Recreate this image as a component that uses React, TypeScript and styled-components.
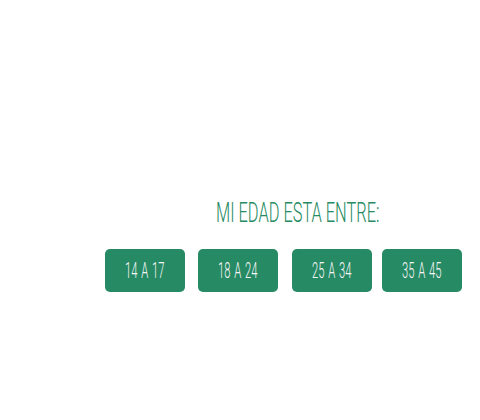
import React from "react";
import styled, { createGlobalStyle } from "styled-components";

const Global = createGlobalStyle`
  html, body { margin: 0; padding: 0; background: #ffffff; }
  body { font-family: Roboto, "Liberation Sans", sans-serif; }
`;

const Page = styled.div`
  width: 480px;
  height: 420px;
  display: flex;
  flex-direction: column;
  align-items: flex-start;
  padding-top: 197px;
  box-sizing: border-box;
`;

const Title = styled.h2`
  margin: 0 0 0 216px;
  font-weight: 300;
  font-size: 28px;
  line-height: 32px;
  color: #268a63;
  white-space: nowrap;
  transform: scaleX(0.585);
  transform-origin: left center;
`;

const Row = styled.div`
  display: flex;
  margin: 20px 0 0 105px;
`;

const AgeButton = styled.button<{ $gap: number }>`
  width: 80px;
  height: 43px;
  margin-right: ${(p) => p.$gap}px;
  border: none;
  border-radius: 5px;
  background: #268a64;
  color: #f6f6f6;
  font-family: inherit;
  padding: 0;
  display: flex;
  align-items: center;
  justify-content: center;
`;

const Label = styled.span`
  display: inline-block;
  font-size: 22px;
  font-weight: 300;
  line-height: 22px;
  white-space: nowrap;
  word-spacing: 2px;
  transform: scaleX(0.51);
`;

const ranges = [
  { label: "14 A 17", gap: 13 },
  { label: "18 A 24", gap: 14 },
  { label: "25 A 34", gap: 10 },
  { label: "35 A 45", gap: 0 },
];

export default function App() {
  return (
    <Page>
      <Global />
      <Title>MI EDAD ESTA ENTRE:</Title>
      <Row>
        {ranges.map((r) => (
          <AgeButton key={r.label} $gap={r.gap}>
            <Label>{r.label}</Label>
          </AgeButton>
        ))}
      </Row>
    </Page>
  );
}
